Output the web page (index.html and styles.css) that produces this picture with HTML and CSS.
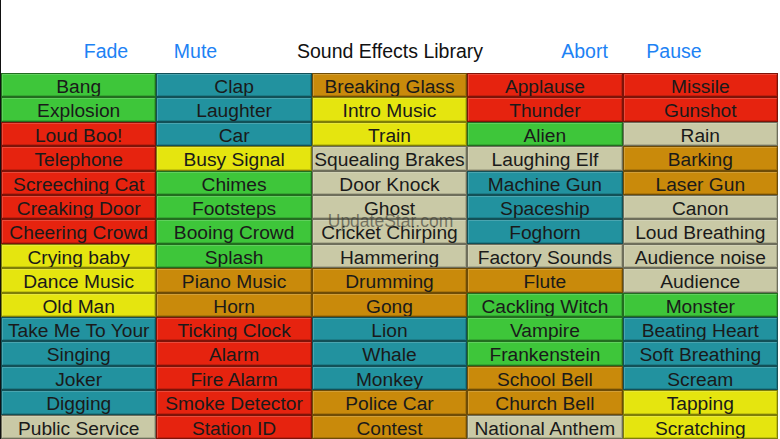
FILE: index.html
```html
<!DOCTYPE html>
<html>
<head>
<meta charset="utf-8">
<link rel="stylesheet" href="styles.css">
</head>
<body>
<div class="page">
  <header class="top">
    <span class="btn">Fade</span>
    <span class="btn">Mute</span>
    <span class="title">Sound Effects Library</span>
    <span class="btn">Abort</span>
    <span class="btn">Pause</span>
  </header>
  <main class="board">
    <div class="cell g">Bang</div><div class="cell t">Clap</div><div class="cell o">Breaking Glass</div><div class="cell r">Applause</div><div class="cell r">Missile</div>
    <div class="cell g">Explosion</div><div class="cell t">Laughter</div><div class="cell y">Intro Music</div><div class="cell r">Thunder</div><div class="cell r">Gunshot</div>
    <div class="cell r">Loud Boo!</div><div class="cell t">Car</div><div class="cell y">Train</div><div class="cell g">Alien</div><div class="cell b">Rain</div>
    <div class="cell r">Telephone</div><div class="cell y">Busy Signal</div><div class="cell b">Squealing Brakes</div><div class="cell b">Laughing Elf</div><div class="cell o">Barking</div>
    <div class="cell r">Screeching Cat</div><div class="cell g">Chimes</div><div class="cell b">Door Knock</div><div class="cell t">Machine Gun</div><div class="cell o">Laser Gun</div>
    <div class="cell r">Creaking Door</div><div class="cell g">Footsteps</div><div class="cell b">Ghost</div><div class="cell t">Spaceship</div><div class="cell b">Canon</div>
    <div class="cell r">Cheering Crowd</div><div class="cell g">Booing Crowd</div><div class="cell b">Cricket Chirping</div><div class="cell t">Foghorn</div><div class="cell b">Loud Breathing</div>
    <div class="cell y">Crying baby</div><div class="cell g">Splash</div><div class="cell b">Hammering</div><div class="cell b">Factory Sounds</div><div class="cell b">Audience noise</div>
    <div class="cell y">Dance Music</div><div class="cell o">Piano Music</div><div class="cell o">Drumming</div><div class="cell o">Flute</div><div class="cell b">Audience</div>
    <div class="cell y">Old Man</div><div class="cell o">Horn</div><div class="cell o">Gong</div><div class="cell g">Cackling Witch</div><div class="cell g">Monster</div>
    <div class="cell t">Take Me To Your</div><div class="cell r">Ticking Clock</div><div class="cell t">Lion</div><div class="cell g">Vampire</div><div class="cell t">Beating Heart</div>
    <div class="cell t">Singing</div><div class="cell r">Alarm</div><div class="cell t">Whale</div><div class="cell g">Frankenstein</div><div class="cell t">Soft Breathing</div>
    <div class="cell t">Joker</div><div class="cell r">Fire Alarm</div><div class="cell t">Monkey</div><div class="cell o">School Bell</div><div class="cell t">Scream</div>
    <div class="cell t">Digging</div><div class="cell r">Smoke Detector</div><div class="cell o">Police Car</div><div class="cell o">Church Bell</div><div class="cell y">Tapping</div>
    <div class="cell b">Public Service</div><div class="cell r">Station ID</div><div class="cell o">Contest</div><div class="cell b">National Anthem</div><div class="cell y">Scratching</div>
  </main>
  <div class="watermark">UpdateStar.com</div>
</div>
</body>
</html>
```
FILE: styles.css
```css
html, body {
  margin: 0;
  padding: 0;
  background: #fff;
}
.page {
  position: relative;
  width: 780px;
  height: 439px;
  overflow: hidden;
  box-sizing: border-box;
  border-left: 1px solid #111;
  font-family: "Liberation Sans", Arial, sans-serif;
}
.top {
  height: 73px;
  display: grid;
  grid-template-columns: 88px 91px 298px 91px 88px;
  justify-content: center;
  align-items: end;
  padding-bottom: 10px;
  box-sizing: border-box;
  margin-left: -1px;
}
.btn, .title {
  text-align: center;
  line-height: 24px;
}
.btn {
  color: #1d82f4;
  font-size: 19.5px;
}
.title {
  color: #111;
  font-size: 19.5px;
}
.board {
  width: 777px;
  height: 366px;
  display: grid;
  grid-template-columns: repeat(5, 1fr);
  grid-template-rows: repeat(15, 1fr);
}
.cell {
  box-sizing: border-box;
  border: 1px solid rgba(0, 0, 0, 0.45);
  box-shadow: inset 1px 1px 0 rgba(255, 255, 255, 0.18), inset -1px -1px 0 rgba(0, 0, 0, 0.15);
  display: flex;
  align-items: center;
  justify-content: center;
  font-size: 19.2px;
  color: #1a1a1a;
  white-space: nowrap;
  overflow: hidden;
  line-height: 1;
  padding-top: 3px;
}
.g { background: #3ec63a; }
.t { background: #22929f; }
.o { background: #c98a0b; }
.r { background: #e6230f; }
.y { background: #e5e50f; }
.b { background: #c9c9a6; }
.watermark {
  position: absolute;
  left: 0;
  right: 0;
  top: 211px;
  text-align: center;
  font-size: 17.5px;
  color: rgba(55, 55, 50, 0.6);
  pointer-events: none;
}
```
